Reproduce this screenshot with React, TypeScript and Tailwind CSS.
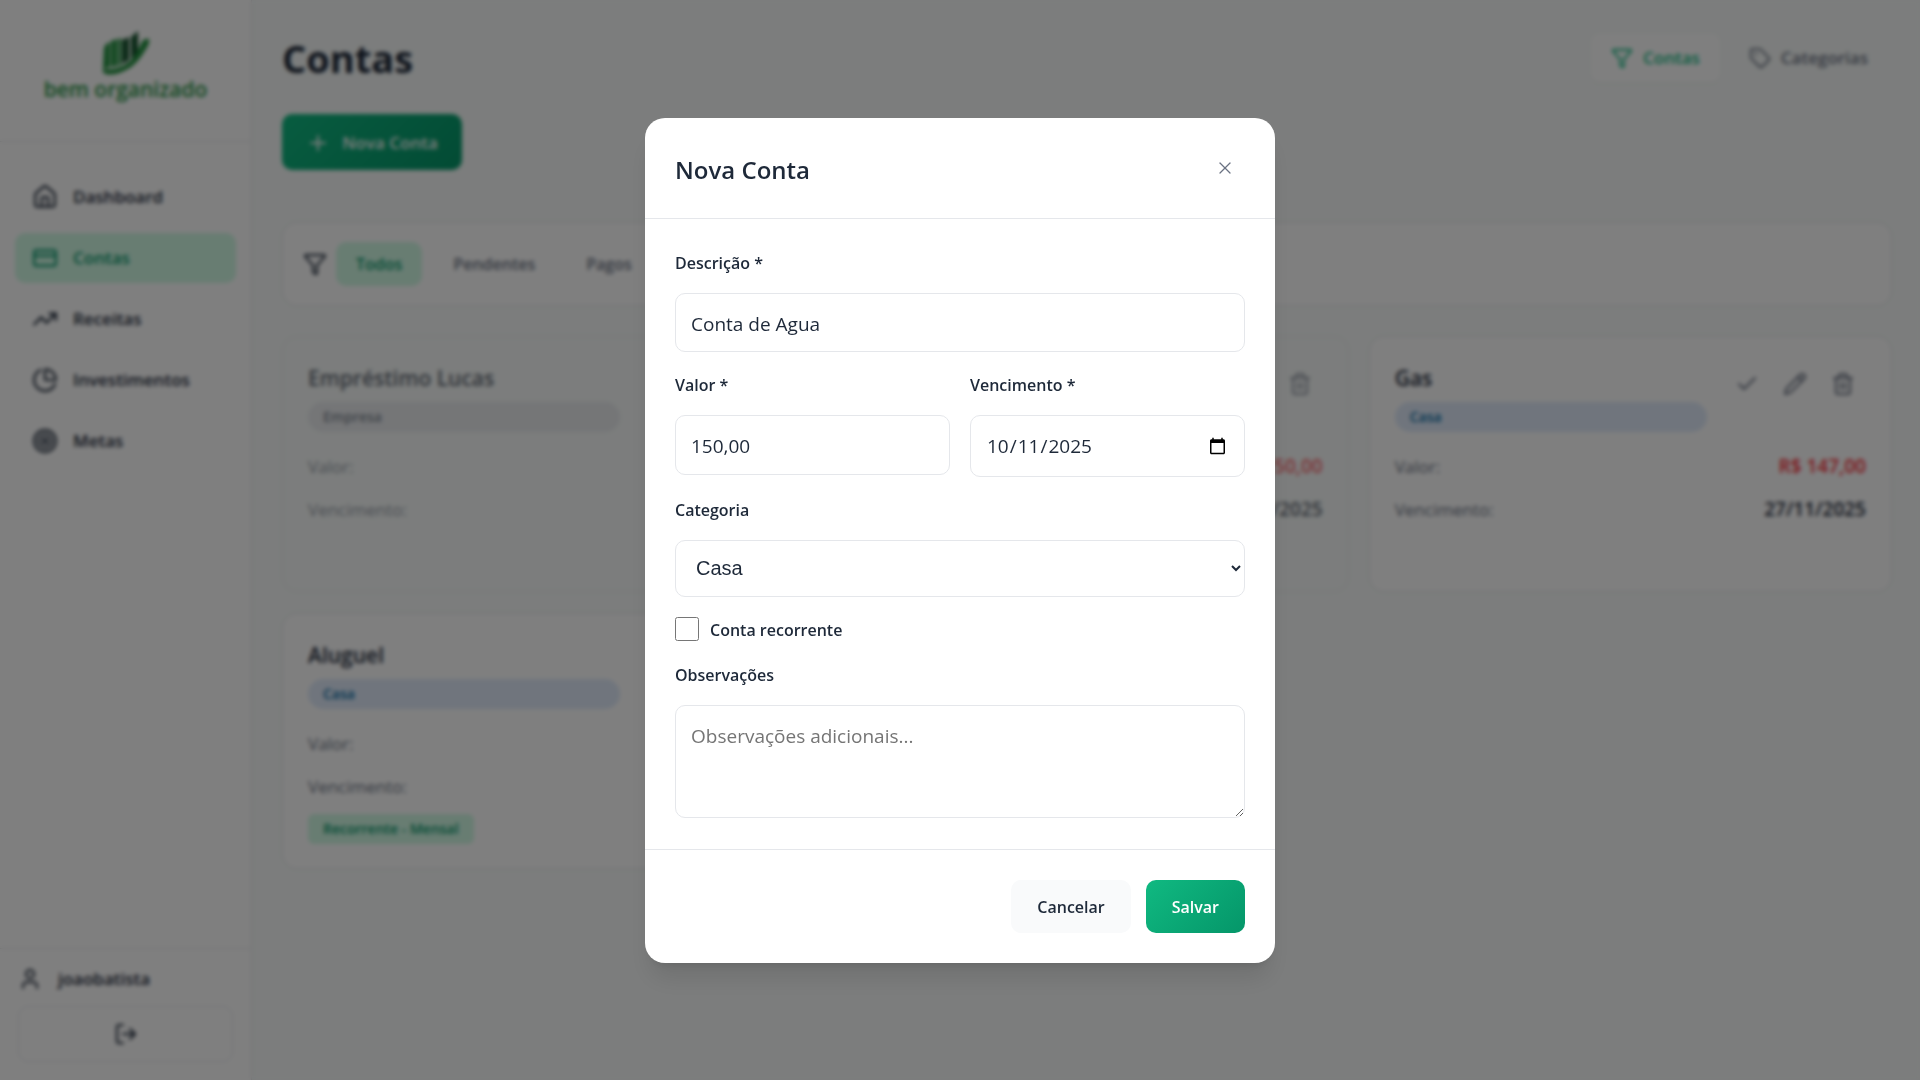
import type { ReactNode } from 'react'
import {
  Check,
  ChartPie,
  CreditCard,
  Funnel,
  House,
  LogOut,
  Pencil,
  Plus,
  Tag,
  Target,
  Trash2,
  TrendingUp,
  User,
  X,
} from 'lucide-react'

interface Bill {
  name: string
  category: string
  amount: string
  dueDate: string
  paid?: boolean
  recurring?: string
}

const navItems = [
  { label: 'Dashboard', icon: House },
  { label: 'Contas', icon: CreditCard, active: true },
  { label: 'Receitas', icon: TrendingUp },
  { label: 'Investimentos', icon: ChartPie },
  { label: 'Metas', icon: Target },
]

const filters = ['Todos', 'Pendentes', 'Pagos']

const bills: Bill[] = [
  { name: 'Empréstimo Lucas', category: 'Empresa', amount: 'R$ 500,00', dueDate: '10/11/2025', paid: true },
  { name: 'Internet', category: 'Casa', amount: 'R$ 150,00', dueDate: '15/11/2025', paid: true },
  { name: 'Gas', category: 'Casa', amount: 'R$ 147,00', dueDate: '27/11/2025' },
  { name: 'Aluguel', category: 'Casa', amount: 'R$ 900,00', dueDate: '05/11/2025', recurring: 'Recorrente - Mensal' },
]

const fieldClass =
  'w-full rounded-[10px] border border-gray-200 bg-white text-gray-800 outline-none'

function Logo() {
  return (
    <div className="flex flex-col items-center">
      <svg viewBox="0 0 48 44" className="h-11 w-12" aria-hidden="true">
        <path d="M2 17q1-4 6-6v25l-7 2z" fill="#22913f" />
        <path d="M9 10l6-2v27l-6 1z" fill="#22913f" />
        <path d="M16 8l3-1v27l-3 1z" fill="#22913f" />
        <path d="M20 9l7-3v23l-7 4z" fill="#14532d" />
        <path d="M29 6l7-6v22l-7 6z" fill="#14532d" />
        <path d="M1 38Q27 41 38 15q3-9 9-7 1 4-3 10-9 16-20 21Q12 45 4 43 0 42 1 38z" fill="#22913f" />
      </svg>
      <span className="text-[21px] leading-7 font-semibold text-[#22913f]">bem organizado</span>
    </div>
  )
}

function Sidebar() {
  return (
    <aside className="flex w-[252px] shrink-0 flex-col border-r border-gray-200 bg-white">
      <div className="flex h-[142px] justify-center border-b border-gray-200 pt-[31px]">
        <Logo />
      </div>
      <nav className="flex flex-1 flex-col gap-[11px] px-[15px] pt-[30px]">
        {navItems.map(({ label, icon: Icon, active }) => (
          <a
            key={label}
            href="#"
            className={`flex h-[50px] items-center gap-[15px] rounded-[10px] px-[17px] text-[17px] font-semibold ${
              active ? 'bg-[#d1fae5] text-[#059669]' : 'text-gray-800'
            }`}
          >
            <Icon className="size-[26px]" strokeWidth={2} />
            {label}
          </a>
        ))}
      </nav>
      <div className="border-t border-gray-200 px-[18px] pt-[14px] pb-[18px]">
        <div className="flex h-8 items-center gap-4 text-[17px] font-semibold text-gray-800">
          <User className="size-6" />
          joaobatista
        </div>
        <button
          type="button"
          aria-label="Sair"
          className="mt-[11px] flex h-14 w-full items-center justify-center rounded-[10px] border border-gray-200 text-gray-800"
        >
          <LogOut className="size-6" />
        </button>
      </div>
    </aside>
  )
}

function BillCard({ bill }: { bill: Bill }) {
  const badge = bill.category === 'Casa' ? 'bg-[#e0ebfb] text-[#0369a1]' : 'bg-gray-200 text-gray-600'
  return (
    <article
      className={`rounded-[15px] border border-gray-200 px-[25px] pt-[25px] ${
        bill.paid ? 'bg-[#f8fbfa] opacity-70' : 'bg-white'
      }`}
    >
      <div className="flex">
        <div className="flex-1">
          <h3 className="text-[21px] leading-8 font-semibold text-gray-800">{bill.name}</h3>
          <span className={`mt-2 block h-[30px] rounded-full px-[15px] text-sm leading-[30px] font-semibold ${badge}`}>
            {bill.category}
          </span>
        </div>
        <div className="flex h-[44px] w-[159px] items-center justify-end gap-6 pr-[11px] text-gray-500">
          <Check className="size-6" />
          <Pencil className="size-6" />
          <Trash2 className="size-6" />
        </div>
      </div>
      <dl className="mt-[13px] text-[17px] leading-[43px] text-gray-500">
        <div className="flex justify-between">
          <dt>Valor:</dt>
          <dd className="text-[19px] leading-[43px] font-semibold text-red-500">{bill.amount}</dd>
        </div>
        <div className="flex justify-between">
          <dt>Vencimento:</dt>
          <dd className="text-[19px] leading-[43px] font-semibold text-gray-800">{bill.dueDate}</dd>
        </div>
      </dl>
      {bill.recurring && (
        <span className="mt-[6px] inline-block h-[30px] rounded-md bg-[#d1fae5] px-[15px] text-sm leading-[30px] font-semibold text-[#059669]">
          {bill.recurring}
        </span>
      )}
    </article>
  )
}

function BillsPage() {
  return (
    <main className="flex-1 bg-[#f8fbfa] pt-7 pr-7 pl-[30px]">
      <header className="flex h-[60px] items-center justify-between">
        <h1 className="text-[38px] font-bold text-gray-800">Contas</h1>
        <div className="flex gap-[5px] text-[17px] font-semibold">
          <button type="button" className="flex h-12 items-center gap-[10px] rounded-[8px] bg-white px-5 text-[#10b981] shadow-xs">
            <Funnel className="size-[22px]" />
            Contas
          </button>
          <button type="button" className="flex h-12 items-center gap-[10px] px-6 text-gray-500">
            <Tag className="size-[22px]" />
            Categorias
          </button>
        </div>
      </header>
      <button
        type="button"
        className="mt-[26px] flex h-14 w-[180px] items-center justify-center gap-3 rounded-[10px] bg-linear-135 from-[#10b981] to-[#059669] pt-0.5 text-[17px] font-semibold text-white"
      >
        <Plus className="size-6" />
        Nova Conta
      </button>
      <div className="mt-[52px] flex h-[84px] items-center rounded-[15px] border border-gray-200 bg-white px-5">
        <Funnel className="mr-[9px] size-6 text-gray-800" />
        {filters.map((filter, i) => (
          <button
            key={filter}
            type="button"
            className={`mr-[11px] h-11 rounded-[10px] px-5 text-base font-semibold ${
              i === 0 ? 'bg-[#d1fae5] text-[#059669]' : 'text-gray-500'
            }`}
          >
            {filter}
          </button>
        ))}
      </div>
      <section className="mt-[30px] grid auto-rows-[256px] grid-cols-3 gap-x-5 gap-y-[21px]">
        {bills.map((bill) => (
          <BillCard key={bill.name} bill={bill} />
        ))}
      </section>
    </main>
  )
}

function Field({ id, label, children }: { id: string; label: string; children: ReactNode }) {
  return (
    <div>
      <label htmlFor={id} className="mb-[17px] block text-base leading-[26px] font-semibold text-gray-800">
        {label}
      </label>
      {children}
    </div>
  )
}

function NewBillModal() {
  return (
    <div className="fixed inset-0 flex items-center justify-center bg-black/50 backdrop-blur-[2px]">
      <form
        role="dialog"
        aria-labelledby="modal-title"
        className="w-full max-w-[630px] rounded-[20px] bg-white shadow-xl"
      >
        <div className="flex h-[101px] items-center justify-between border-b border-gray-200 px-[30px]">
          <h2 id="modal-title" className="pt-1 text-2xl font-semibold text-gray-800">
            Nova Conta
          </h2>
          <button type="button" aria-label="Fechar" className="flex size-10 items-center justify-center text-gray-500">
            <X className="size-5" strokeWidth={1.5} />
          </button>
        </div>

        <div className="flex flex-col gap-5 px-[30px] pt-[31px] pb-[31px]">
          <Field id="descricao" label="Descrição *">
            <input id="descricao" defaultValue="Conta de Agua" className={`${fieldClass} block h-[59px] px-[15px] pt-1 text-[19px]`} />
          </Field>
          <div className="grid grid-cols-2 gap-5">
            <Field id="valor" label="Valor *">
              <input id="valor" defaultValue="150,00" className={`${fieldClass} block h-[60px] px-[15px] pt-0.5 text-[19px]`} />
            </Field>
            <Field id="vencimento" label="Vencimento *">
              <input
                id="vencimento"
                type="date"
                defaultValue="2025-10-11"
                className={`${fieldClass} block h-[62px] px-[15px] pt-0.5 text-[19px]`}
              />
            </Field>
          </div>
          <Field id="categoria" label="Categoria">
            <select
              id="categoria"
              defaultValue="Casa"
              className={`${fieldClass} block h-[57px] px-4 font-['Liberation_Sans',sans-serif] text-xl`}
            >
              <option>Casa</option>
              <option>Empresa</option>
            </select>
          </Field>
          <div className="flex h-[25px] items-center gap-[11px]">
            <input id="recorrente" type="checkbox" className="size-6" />
            <label htmlFor="recorrente" className="pt-0.5 text-base leading-6 font-semibold text-gray-800">
              Conta recorrente
            </label>
          </div>
          <Field id="observacoes" label="Observações">
            <textarea
              id="observacoes"
              placeholder="Observações adicionais..."
              className={`${fieldClass} block h-[113px] resize-y px-[15px] py-4 text-[19px] placeholder:text-[#757575]`}
            />
          </Field>
        </div>

        <div className="flex justify-end gap-[15px] border-t border-gray-200 p-[30px] text-base font-semibold">
          <button type="button" className="h-[53px] rounded-[10px] bg-gray-50 px-[26px] pt-0.5 text-gray-800">
            Cancelar
          </button>
          <button
            type="submit"
            className="h-[53px] rounded-[10px] bg-linear-135 from-[#10b981] to-[#059669] px-[26px] pt-0.5 text-white"
          >
            Salvar
          </button>
        </div>
      </form>
    </div>
  )
}

export default function App() {
  return (
    <div className="flex min-h-screen font-['Segoe_UI','Open_Sans',sans-serif]">
      <Sidebar />
      <BillsPage />
      <NewBillModal />
    </div>
  )
}
